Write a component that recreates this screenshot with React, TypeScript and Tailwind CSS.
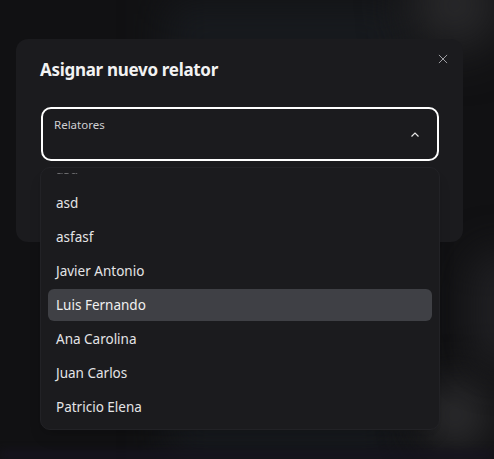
const items = [
  "asd",
  "asd",
  "asfasf",
  "Javier Antonio",
  "Luis Fernando",
  "Ana Carolina",
  "Juan Carlos",
  "Patricio Elena",
];

const CloseIcon = () => (
  <svg viewBox="0 0 24 24" className="w-[14px] h-[14px]" fill="none" stroke="currentColor" strokeWidth={1.6}>
    <path d="M5 5l14 14M19 5L5 19" />
  </svg>
);

const ChevronUp = () => (
  <svg viewBox="0 0 24 24" className="w-[12px] h-[12px]" fill="none" stroke="currentColor" strokeWidth={2.4}>
    <path d="M5 15l7-7 7 7" />
  </svg>
);

export default function App() {
  return (
    <div
      className="relative h-[459px] w-full overflow-hidden bg-[#111113] text-white"
      style={{ fontFamily: '"Noto Sans", "Open Sans", sans-serif' }}
    >
      {/* blurred backdrop */}
      <div className="absolute left-[165px] top-0 h-full w-[240px] bg-[#171a1e] blur-[20px]" />
      <div className="absolute -top-[40px] left-[410px] h-[90px] w-[90px] rounded-full bg-[#2a2a2c] blur-[25px]" />
      <div className="absolute top-[380px] left-[420px] h-[70px] w-[70px] rounded-full bg-[#2c2c2e] blur-[20px]" />
      <div className="absolute top-[250px] left-[470px] h-[120px] w-[60px] rounded-full bg-[#202023] blur-[20px]" />
      <div className="absolute bottom-0 left-0 h-[8px] w-full bg-[#161320] blur-[4px]" />

      <div className="relative ml-4 mt-[39px] flex h-[203px] w-[447px] flex-col rounded-xl bg-[#1b1b1e] px-6 pt-[19px]">
        <button className="absolute right-[13px] top-[13px] text-[#a8a8ac]">
          <CloseIcon />
        </button>
        <h2 className="text-[17px] font-bold leading-[24px] tracking-[-0.3px] text-[#f2f2f2]">
          Asignar nuevo relator
        </h2>

        <div className="relative mt-[25px] ml-px flex h-[54px] w-[398px] items-center justify-between rounded-[10px] border-2 border-white pl-[11px] pr-[16px]">
          <span className="self-start pt-[8px] text-[11.5px] leading-[16px] text-[#cfcfd2]">Relatores</span>
          <span className="pt-[2px] text-[#e8e8e8]">
            <ChevronUp />
          </span>

          {/* open listbox */}
          <div className="absolute -left-[3px] top-[58px] h-[263px] w-[400px] overflow-hidden rounded-[10px] border border-[#222226] bg-[#1b1b1e] shadow-lg">
            <div className="mt-[5px] h-[252px] overflow-hidden px-[7px]">
              <div className="-mt-[20px] flex flex-col gap-[2px]">
                {items.map((name, i) => (
                  <div
                    key={i}
                    className={
                      "flex h-8 items-center rounded-md px-2 text-[13.5px] " +
                      (name === "Luis Fernando" ? "bg-[#3f4045] text-[#f0f0f0]" : "text-[#e4e4e6]") +
                      (i === 0 ? " opacity-40" : "")
                    }
                  >
                    {name}
                  </div>
                ))}
              </div>
            </div>
          </div>
        </div>
      </div>
    </div>
  );
}
